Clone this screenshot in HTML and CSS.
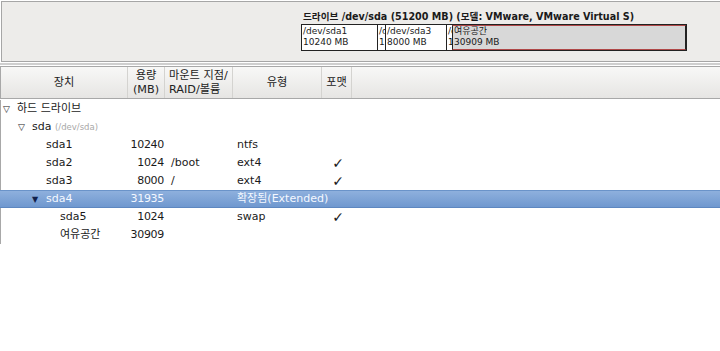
FILE: index.html
```html
<!DOCTYPE html>
<html lang="ko">
<head>
<meta charset="utf-8">
<link rel="stylesheet" href="styles.css">
</head>
<body>
<div class="panel">
  <div class="drive">
    <div class="drive-title">드라이브 /dev/sda (51200 MB) (모델: VMware, VMware Virtual S)</div>
    <div class="bar">
      <div class="seg s1"><span>/dev/sda1</span><span>10240 MB</span></div>
      <div class="seg s2"><span>/d</span><span>1</span></div>
      <div class="seg s3"><span>/dev/sda3</span><span>8000 MB</span></div>
      <div class="seg s4"><span>/d</span><span>1</span></div>
      <div class="seg free"><span>여유공간</span><span>30909 MB</span></div>
    </div>
  </div>
</div>
<div class="sep"></div>
<div class="table">
  <div class="header">
    <div class="hc c-dev">장치</div>
    <div class="hc c-size">용량<br>(MB)</div>
    <div class="hc c-mount left">마운트 지점/<br>RAID/볼륨</div>
    <div class="hc c-type">유형</div>
    <div class="hc c-fmt">포맷</div>
    <div class="hc c-rest"></div>
  </div>
  <div class="rows">
    <div class="row"><div class="cell c-dev l0"><span class="tri">▽</span>하드 드라이브</div></div>
    <div class="row"><div class="cell c-dev l1"><span class="tri">▽</span>sda <span class="dim">(/dev/sda)</span></div></div>
    <div class="row"><div class="cell c-dev l2">sda1</div><div class="cell c-size num">10240</div><div class="cell c-mount"></div><div class="cell c-type">ntfs</div><div class="cell c-fmt"></div></div>
    <div class="row"><div class="cell c-dev l2">sda2</div><div class="cell c-size num">1024</div><div class="cell c-mount">/boot</div><div class="cell c-type">ext4</div><div class="cell c-fmt chk">✓</div></div>
    <div class="row"><div class="cell c-dev l2">sda3</div><div class="cell c-size num">8000</div><div class="cell c-mount">/</div><div class="cell c-type">ext4</div><div class="cell c-fmt chk">✓</div></div>
    <div class="row sel"><div class="cell c-dev l2t"><span class="tri">▼</span>sda4</div><div class="cell c-size num">31935</div><div class="cell c-mount"></div><div class="cell c-type">확장됨(Extended)</div><div class="cell c-fmt"></div></div>
    <div class="row"><div class="cell c-dev l3">sda5</div><div class="cell c-size num">1024</div><div class="cell c-mount"></div><div class="cell c-type">swap</div><div class="cell c-fmt chk">✓</div></div>
    <div class="row"><div class="cell c-dev l3">여유공간</div><div class="cell c-size num">30909</div><div class="cell c-mount"></div><div class="cell c-type"></div><div class="cell c-fmt"></div></div>
  </div>
</div>
</body>
</html>
```

FILE: styles.css
```css
html, body {
  margin: 0;
  padding: 0;
  background: #ffffff;
  font-family: "DejaVu Sans", "Noto Sans CJK KR", sans-serif;
  font-size: 11px;
  color: #1a1a1a;
  width: 720px;
  height: 351px;
  overflow: hidden;
}
.panel {
  height: 59px;
  margin-top: 1px;
  border-top: 1px solid #a6a6a6;
  border-bottom: 1px solid #a6a6a6;
  border-left: 1px solid #a6a6a6;
  margin-left: 1px;
  background: #edecea;
  display: flex;
}
.drive {
  margin-left: 299px;
  padding-top: 8px;
}
.drive-title {
  font-weight: bold;
  font-size: 9.6px;
  line-height: 13px;
  height: 14px;
  padding-left: 2px;
}
.bar {
  display: flex;
  width: 384px;
  height: 25px;
  border: 1px solid #222;
  background: #fff;
}
.seg {
  display: flex;
  flex-direction: column;
  font-size: 9px;
  line-height: 11px;
  padding: 1px 0 0 1px;
  overflow: hidden;
  white-space: nowrap;
  box-sizing: border-box;
  border-right: 1px solid #222;
  flex-shrink: 0;
}
.s1 { width: 76px; }
.s2 { width: 8px; }
.s3 { width: 61px; }
.s4 { width: 5px; border-right: none; background: #fff; }
.free {
  flex: 1;
  background: #d8d8d8;
  border: 1px solid #b04848;
  border-left: 1px solid #222;
  border-right: 1px solid #222;
  padding-top: 0;
  padding-left: 1px;
}
.sep {
  height: 2px;
  background: #cfcfcf;
  margin-top: 1px;
}
.table {
  margin-top: 1px;
}
.header {
  display: flex;
  height: 31px;
  border-top: 1px solid #a8a8a8;
  border-bottom: 1px solid #a8a8a8;
  background: linear-gradient(#f8f8f7, #e6e5e3);
}
.hc {
  box-sizing: border-box;
  border-right: 1px solid #d4d3d0;
  display: flex;
  align-items: center;
  justify-content: center;
  text-align: center;
  font-size: 11.2px;
  line-height: 14px;
  color: #222;
  white-space: nowrap;
}
.hc.left { justify-content: flex-start; text-align: left; padding-left: 4px; }
.c-dev { width: 128px; }
.c-size { width: 37px; }
.c-mount { width: 68px; }
.c-type { width: 89px; }
.c-fmt { width: 30px; }
.c-rest { flex: 1; border-right: none; }
.header .c-dev { border-left: 1px solid #a8a8a8; }
.rows {
  margin-top: 1px;
  border-left: 1px solid #a8a8a8;
}
.row {
  display: flex;
  height: 18px;
  align-items: center;
  white-space: nowrap;
}
.cell {
  box-sizing: border-box;
  line-height: 18px;
}
.l0 { padding-left: 2px; }
.l1 { padding-left: 17px; }
.l2 { padding-left: 45px; }
.l2t { padding-left: 31px; }
.l3 { padding-left: 59px; }
.tri {
  display: inline-block;
  width: 14px;
  font-size: 9px;
}
.dim { color: #a8a8a8; font-size: 8.5px; }
.num { text-align: right; padding-right: 2px; letter-spacing: -0.3px; }
.c-mount.cell { padding-left: 5px; }
.c-type.cell { padding-left: 3px; }
.chk { text-align: center; font-size: 14px; padding-left: 0; }
.sel {
  background: linear-gradient(#8eb0dd, #6f98cf);
  color: #f4f8ff;
  border-top: 1px solid #6a93c9;
  border-bottom: 1px solid #5d87c0;
  height: 16px;
  margin-left: -1px;
  padding-left: 1px;
}
.sel .tri { color: #10204a; font-size: 8px; }
```
